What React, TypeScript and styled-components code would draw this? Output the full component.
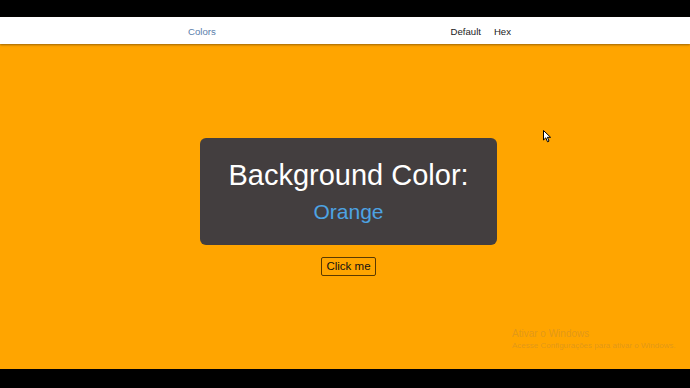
import * as React from 'react';
import styled, { createGlobalStyle } from 'styled-components';

const GlobalStyle = createGlobalStyle`
  html, body {
    margin: 0;
    padding: 0;
    height: 100%;
    background: #000;
  }
  #root {
    height: 100%;
  }
`;

const Screen = styled.div`
  height: 388px;
  width: 690px;
  display: flex;
  flex-direction: column;
  font-family: "Liberation Sans", Arial, sans-serif;
  position: relative;
  overflow: hidden;
`;

const Letterbox = styled.div<{ $h: number }>`
  height: ${p => p.$h}px;
  flex: 0 0 ${p => p.$h}px;
  background: #000;
`;

const Navbar = styled.nav`
  height: 27px;
  flex: 0 0 27px;
  box-sizing: border-box;
  background: #fff;
  display: flex;
  align-items: center;
  justify-content: space-between;
  padding: 2px 179px 0 188px;
  box-shadow: 0 1px 2px rgba(90, 60, 10, 0.6);
  position: relative;
  z-index: 1;
  font-size: 9.6px;
`;

const Brand = styled.span`
  color: #5b7eab;
`;

const NavLinks = styled.div`
  display: flex;
  gap: 13px;
`;

const NavLink = styled.span`
  color: #222;
`;

const Main = styled.main`
  flex: 1;
  background: #ffa500;
  display: flex;
  flex-direction: column;
  align-items: center;
  justify-content: center;
  gap: 12px;
  padding-left: 7px;
  position: relative;
`;

const Card = styled.div`
  width: 297px;
  box-sizing: border-box;
  background: #433e3f;
  border-radius: 6px;
  padding: 21px 0 21px;
  display: flex;
  flex-direction: column;
  align-items: center;
  gap: 8px;
`;

const Title = styled.div`
  color: #fff;
  font-size: 29px;
`;

const ColorName = styled.div`
  color: #4da3e3;
  font-size: 21px;
`;

const Button = styled.button`
  font-family: "Liberation Sans", Arial, sans-serif;
  font-size: 11.5px;
  color: #111;
  background: transparent;
  border: 1px solid #5a3a00;
  border-radius: 2px;
  padding: 2px 4px;
  height: 19px;
  line-height: 13px;
`;

const Watermark = styled.div`
  position: absolute;
  left: 512px;
  top: 284px;
  color: rgba(150, 120, 80, 0.3);
`;

const WatermarkTitle = styled.div`
  font-size: 10px;
`;

const WatermarkText = styled.div`
  font-size: 8px;
  margin-top: 2px;
`;

const Cursor = styled.svg`
  position: absolute;
  left: 543px;
  top: 86px;
`;

export default function App() {
  return (
    <Screen>
      <GlobalStyle />
      <Letterbox $h={17} />
      <Navbar>
        <Brand>Colors</Brand>
        <NavLinks>
          <NavLink>Default</NavLink>
          <NavLink>Hex</NavLink>
        </NavLinks>
      </Navbar>
      <Main>
        <Card>
          <Title>Background Color:</Title>
          <ColorName>Orange</ColorName>
        </Card>
        <Button>Click me</Button>
        <Watermark>
          <WatermarkTitle>Ativar o Windows</WatermarkTitle>
          <WatermarkText>Acesse Configurações para ativar o Windows.</WatermarkText>
        </Watermark>
        <Cursor width="9" height="13" viewBox="0 0 9 13">
          <path d="M0.5 0.5 L0.5 10 L2.8 7.8 L4.5 11.8 L6 11.1 L4.4 7.3 L7.6 7.3 Z" fill="#fff" stroke="#000" strokeWidth="1" />
        </Cursor>
      </Main>
      <Letterbox $h={19} />
    </Screen>
  );
}
